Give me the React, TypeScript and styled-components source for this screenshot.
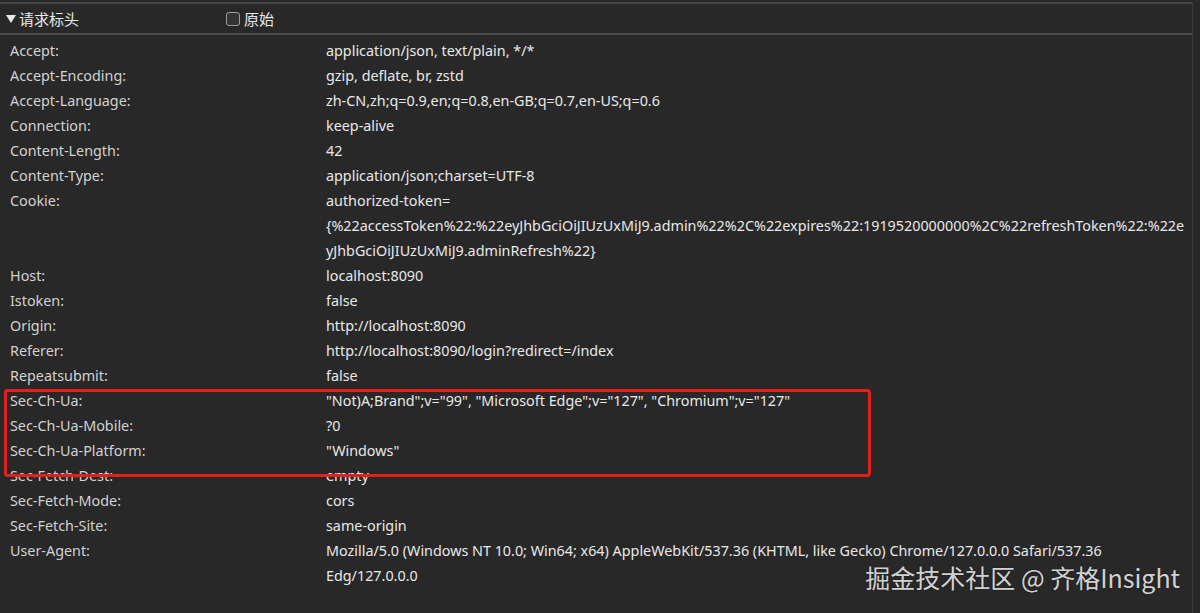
import styled, { createGlobalStyle } from "styled-components"

const GlobalStyle = createGlobalStyle`
  html, body {
    margin: 0;
    padding: 0;
    background: #282828;
  }
  body {
    font-family: "Segoe UI", "Noto Sans", "Noto Sans CJK SC", sans-serif;
  }
`

interface Header {
  name: string
  value: string[]
}

const headers: Header[] = [
  { name: "Accept", value: ["application/json, text/plain, */*"] },
  { name: "Accept-Encoding", value: ["gzip, deflate, br, zstd"] },
  { name: "Accept-Language", value: ["zh-CN,zh;q=0.9,en;q=0.8,en-GB;q=0.7,en-US;q=0.6"] },
  { name: "Connection", value: ["keep-alive"] },
  { name: "Content-Length", value: ["42"] },
  { name: "Content-Type", value: ["application/json;charset=UTF-8"] },
  {
    name: "Cookie",
    value: [
      "authorized-token=",
      "{%22accessToken%22:%22eyJhbGciOiJIUzUxMiJ9.admin%22%2C%22expires%22:1919520000000%2C%22refreshToken%22:%22e",
      "yJhbGciOiJIUzUxMiJ9.adminRefresh%22}",
    ],
  },
  { name: "Host", value: ["localhost:8090"] },
  { name: "Istoken", value: ["false"] },
  { name: "Origin", value: ["http://localhost:8090"] },
  { name: "Referer", value: ["http://localhost:8090/login?redirect=/index"] },
  { name: "Repeatsubmit", value: ["false"] },
  { name: "Sec-Ch-Ua", value: ['"Not)A;Brand";v="99", "Microsoft Edge";v="127", "Chromium";v="127"'] },
  { name: "Sec-Ch-Ua-Mobile", value: ["?0"] },
  { name: "Sec-Ch-Ua-Platform", value: ['"Windows"'] },
  { name: "Sec-Fetch-Dest", value: ["empty"] },
  { name: "Sec-Fetch-Mode", value: ["cors"] },
  { name: "Sec-Fetch-Site", value: ["same-origin"] },
  {
    name: "User-Agent",
    value: [
      "Mozilla/5.0 (Windows NT 10.0; Win64; x64) AppleWebKit/537.36 (KHTML, like Gecko) Chrome/127.0.0.0 Safari/537.36",
      "Edg/127.0.0.0",
    ],
  },
]

const Page = styled.div`
  position: relative;
  width: 1200px;
  height: 613px;
  overflow: hidden;
  background: #282828;
  padding-top: 2px;
  box-sizing: border-box;
`

const Panel = styled.div`
  width: 1193px;
  height: 100%;
  border-top: 2px solid #474747;
  border-right: 1px solid #3a3a3a;
  box-sizing: border-box;
`

const SectionHeader = styled.div`
  display: flex;
  align-items: center;
  height: 29px;
  border-bottom: 2px solid #4a4a4a;
  color: #e8e8e8;
  font-size: 15px;
`

const Title = styled.div`
  display: flex;
  align-items: center;
  width: 226px;
  padding-left: 6px;
  box-sizing: border-box;
  font-family: "Noto Sans CJK SC", sans-serif;
`

const Triangle = styled.span`
  width: 0;
  height: 0;
  border-left: 5px solid transparent;
  border-right: 5px solid transparent;
  border-top: 8px solid #e8e8e8;
  margin-right: 3px;
`

const RawToggle = styled.label`
  display: flex;
  align-items: center;
  gap: 4px;
  font-family: "Noto Sans CJK SC", sans-serif;
`

const Box = styled.span`
  width: 12px;
  height: 12px;
  border: 1px solid #9a9a9a;
  border-radius: 3px;
  background: #333;
`

const List = styled.div`
  padding-top: 3px;
`

const Row = styled.div`
  display: grid;
  grid-template-columns: 316px 1fr;
  padding-left: 10px;
  font-size: 14.35px;
  line-height: 25px;
`

const Name = styled.div`
  color: #d2d2d2;
`

const Value = styled.div`
  color: #e8e8e8;
  white-space: nowrap;
`

const Highlight = styled.div`
  position: absolute;
  left: 4px;
  top: 389px;
  width: 867px;
  height: 88px;
  border: 3px solid #e3211c;
  border-radius: 4px;
  box-sizing: border-box;
  pointer-events: none;
`

const Watermark = styled.div`
  position: absolute;
  right: 20px;
  top: 559px;
  font-family: "Noto Sans CJK SC", sans-serif;
  font-size: 25px;
  color: rgba(235, 235, 235, 0.9);
  text-shadow: 0 0 2px rgba(0, 0, 0, 0.4);
`

export default function App() {
  return (
    <Page>
      <GlobalStyle />
      <Panel>
        <SectionHeader>
          <Title>
            <Triangle />
            请求标头
          </Title>
          <RawToggle>
            <Box />
            原始
          </RawToggle>
        </SectionHeader>
        <List>
          {headers.map((h) => (
            <Row key={h.name}>
              <Name>{h.name}:</Name>
              <Value>
                {h.value.map((line, i) => (
                  <div key={i}>{line}</div>
                ))}
              </Value>
            </Row>
          ))}
        </List>
      </Panel>
      <Highlight />
      <Watermark>掘金技术社区 @ 齐格Insight</Watermark>
    </Page>
  )
}
